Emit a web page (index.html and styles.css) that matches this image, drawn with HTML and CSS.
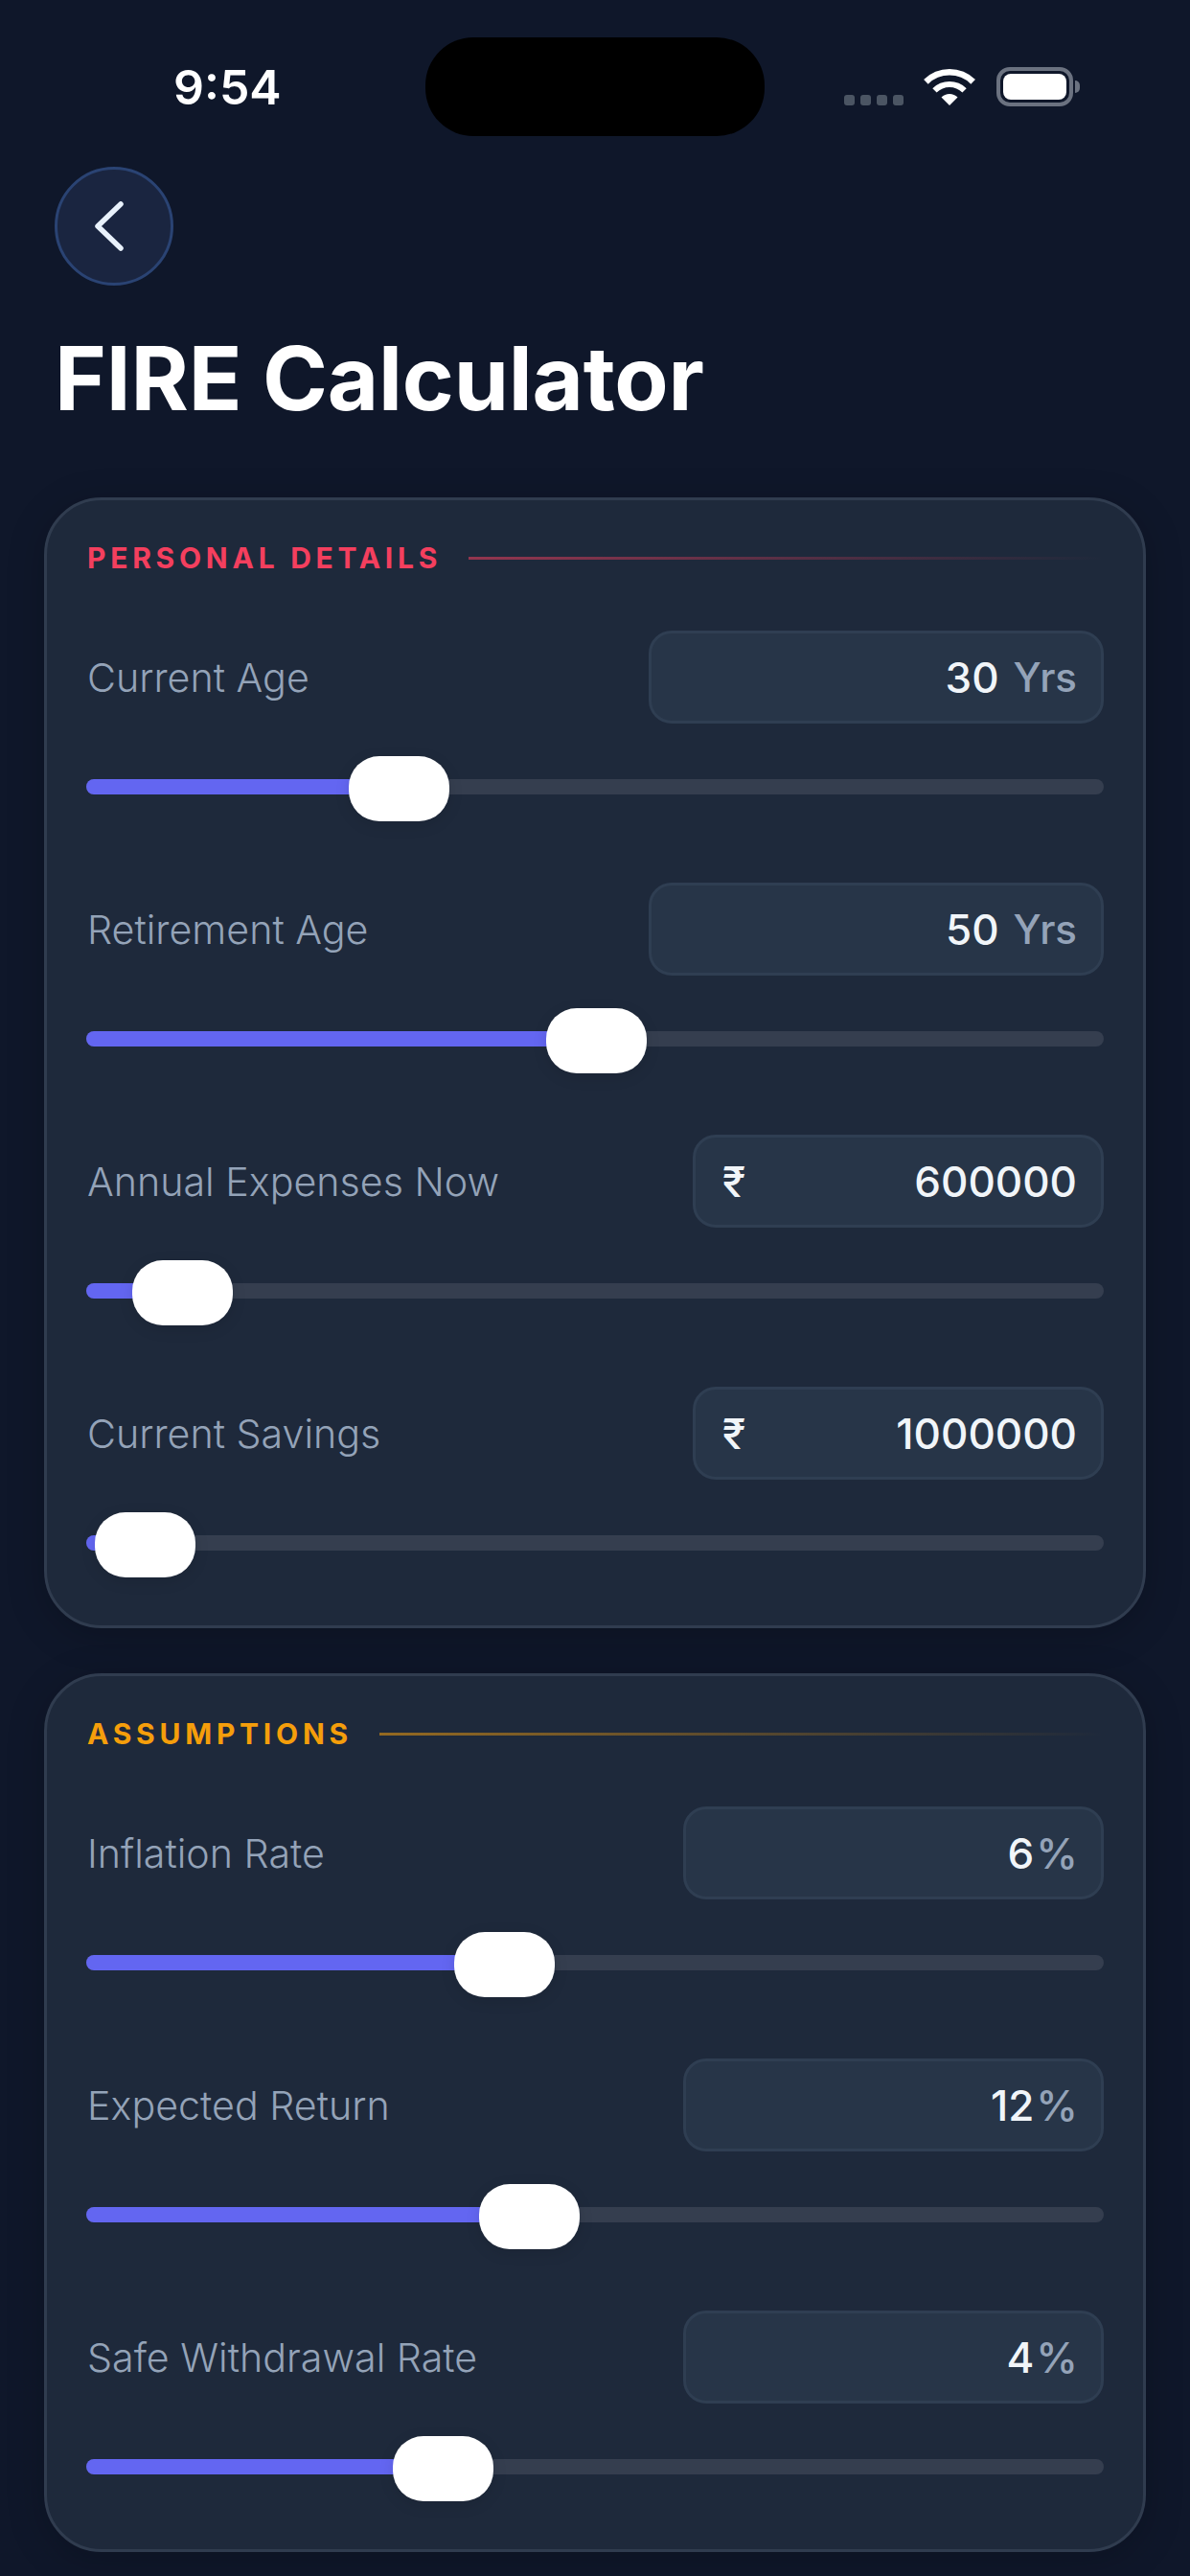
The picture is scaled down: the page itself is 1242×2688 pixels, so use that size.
FILE: index.html
```html
<!DOCTYPE html>
<html lang="en">
<head>
<meta charset="utf-8">
<meta name="viewport" content="width=device-width, initial-scale=1.0">
<title>FIRE Calculator</title>
<link rel="stylesheet" href="styles.css">
</head>
<body>
  <!-- Status bar -->
  <div class="status-bar">
    <span class="time">9:54</span>
    <div class="island"></div>
    <div class="status-icons">
      <div class="signal"><i></i><i></i><i></i><i></i></div>
      <svg class="wifi" width="54" height="39" viewBox="0 0 54 39" fill="#fff">
        <path d="M0.1 12.1A38 38 0 0 1 53.9 12.1L49.3 16.7A31.5 31.5 0 0 0 4.7 16.7Z"/>
        <path d="M9.3 21.3A25 25 0 0 1 44.7 21.3L40.4 25.6A19 19 0 0 0 13.6 25.6Z"/>
        <path d="M18.5 30.5A12 12 0 0 1 35.5 30.5L27 39Z"/>
      </svg>
      <div class="battery"><div class="battery-level"></div></div>
      <div class="battery-nub"></div>
    </div>
  </div>

  <!-- Header -->
  <div class="header">
    <button class="back-btn" type="button">
      <svg width="30" height="52" viewBox="0 0 30 52" fill="none" stroke="#e8f1fb" stroke-width="5.5" stroke-linecap="round" stroke-linejoin="round">
        <path d="M27 3L3 26L27 49"/>
      </svg>
    </button>
    <h1>FIRE Calculator</h1>
  </div>

  <div class="content">
    <div class="card">
      <div class="section-title red"><span>PERSONAL DETAILS</span><div class="section-line"></div></div>

      <div class="row">
        <div class="row-top">
          <span class="label">Current Age</span>
          <div class="field field-yrs"><span class="value">30</span><span class="unit">Yrs</span></div>
        </div>
        <div class="slider"><div class="fill" style="width: 28%"></div><div class="thumb" style="left: 25.8%"></div></div>
      </div>

      <div class="row">
        <div class="row-top">
          <span class="label">Retirement Age</span>
          <div class="field field-yrs"><span class="value">50</span><span class="unit">Yrs</span></div>
        </div>
        <div class="slider"><div class="fill" style="width: 47%"></div><div class="thumb" style="left: 45.2%"></div></div>
      </div>

      <div class="row">
        <div class="row-top">
          <span class="label">Annual Expenses Now</span>
          <div class="field field-money"><span class="rupee">₹</span><span class="value">600000</span></div>
        </div>
        <div class="slider"><div class="fill" style="width: 6%"></div><div class="thumb" style="left: 4.5%"></div></div>
      </div>

      <div class="row">
        <div class="row-top">
          <span class="label">Current Savings</span>
          <div class="field field-money"><span class="rupee">₹</span><span class="value">1000000</span></div>
        </div>
        <div class="slider"><div class="fill" style="width: 3%"></div><div class="thumb" style="left: 0.85%"></div></div>
      </div>
    </div>

    <div class="card">
      <div class="section-title orange"><span>ASSUMPTIONS</span><div class="section-line"></div></div>

      <div class="row">
        <div class="row-top">
          <span class="label">Inflation Rate</span>
          <div class="field field-pct"><span class="value">6</span><span class="unit">%</span></div>
        </div>
        <div class="slider"><div class="fill" style="width: 38%"></div><div class="thumb" style="left: 36.2%"></div></div>
      </div>

      <div class="row">
        <div class="row-top">
          <span class="label">Expected Return</span>
          <div class="field field-pct"><span class="value">12</span><span class="unit">%</span></div>
        </div>
        <div class="slider"><div class="fill" style="width: 40%"></div><div class="thumb" style="left: 38.6%"></div></div>
      </div>

      <div class="row">
        <div class="row-top">
          <span class="label">Safe Withdrawal Rate</span>
          <div class="field field-pct"><span class="value">4</span><span class="unit">%</span></div>
        </div>
        <div class="slider"><div class="fill" style="width: 32%"></div><div class="thumb" style="left: 30.1%"></div></div>
      </div>
    </div>
  </div>
</body>
</html>
```

FILE: styles.css
```css
* {
  box-sizing: border-box;
}

body {
  margin: 0;
  min-height: 100vh;
  background-color: #0f172a;
  font-family: Inter, "Liberation Sans", sans-serif;
  color: #fff;
}

/* Status bar */
.status-bar {
  position: relative;
  display: flex;
  justify-content: space-between;
  align-items: center;
  height: 111px;
  padding: 70px 115px 0 181px;
}

.time {
  padding-top: 2px;
  font-size: 50px;
  font-weight: 600;
  line-height: 41px;
}

.island {
  position: absolute;
  left: 444px;
  top: 39px;
  width: 354px;
  height: 103px;
  border-radius: 50px;
  background-color: #000;
}

.status-icons {
  display: flex;
  align-items: flex-end;
  height: 41px;
}

.signal {
  display: flex;
  gap: 6px;
  margin-right: 21px;
  padding-bottom: 1px;
}

.signal i {
  display: block;
  width: 11px;
  height: 11px;
  border-radius: 3px;
  background-color: #4b5563;
}

.wifi {
  display: block;
  margin-right: 22px;
  margin-bottom: 1px;
}

.battery {
  width: 80px;
  height: 41px;
  padding: 3px;
  border: 4px solid #6b7280;
  border-radius: 14px;
}

.battery-level {
  height: 100%;
  border-radius: 8px;
  background-color: #fff;
}

.battery-nub {
  align-self: center;
  width: 5px;
  height: 13px;
  margin-left: 2px;
  border-radius: 0 5px 5px 0;
  background-color: #6b7280;
}

/* Header */
.header {
  padding: 63px 57px 0;
}

.back-btn {
  display: flex;
  align-items: center;
  justify-content: center;
  width: 124px;
  height: 124px;
  padding: 0 10px 0 0;
  border: 3px solid #2a4373;
  border-radius: 50%;
  background-color: #1a2540;
}

h1 {
  margin: 47px 0 0;
  font-size: 92px;
  font-weight: 700;
  line-height: 100px;
  letter-spacing: -0.2px;
}

/* Cards */
.content {
  display: flex;
  flex-direction: column;
  gap: 47px;
  margin-top: 74px;
  padding: 0 46px;
}

.card {
  display: flex;
  flex-direction: column;
  gap: 64px;
  padding: 42px 41px 50px;
  border: 3px solid #303c4f;
  border-radius: 60px;
  background-color: #1e293b;
  box-shadow: 0 8px 40px rgba(0, 0, 0, 0.2);
}

.section-title {
  display: flex;
  align-items: center;
  gap: 28px;
  height: 36px;
  margin-bottom: -6px;
  padding-left: 1px;
  font-size: 30px;
  font-weight: 700;
  letter-spacing: 4.75px;
}

.section-line {
  flex: 1;
  height: 3px;
}

.red {
  color: #f43f5e;
}

.red .section-line {
  background: linear-gradient(to right, rgba(244, 63, 94, 0.55), rgba(244, 63, 94, 0));
}

.orange {
  color: #f59e0b;
}

.orange .section-line {
  background: linear-gradient(to right, rgba(245, 158, 11, 0.55), rgba(245, 158, 11, 0));
}

.row {
  display: flex;
  flex-direction: column;
  gap: 34px;
}

.row-top {
  display: flex;
  justify-content: space-between;
  align-items: center;
}

.label {
  padding-left: 1px;
  font-size: 41.2px;
  font-weight: 350;
  color: #94a3b8;
}

.field {
  display: flex;
  align-items: center;
  justify-content: flex-end;
  height: 97px;
  padding: 0 25px 0 28px;
  border: 3px solid #2f3e52;
  border-radius: 24px;
  background-color: #273548;
  font-size: 44px;
  font-weight: 500;
}

.field-yrs {
  width: 475px;
  gap: 15px;
}

.field-yrs .unit {
  font-size: 42px;
}

.field-money {
  width: 429px;
  justify-content: space-between;
}

.field-pct {
  width: 439px;
  gap: 2px;
  padding-right: 24px;
}

.value {
  color: #f1f5f9;
}

.unit {
  color: #94a3b8;
}

.rupee {
  color: #f1f5f9;
}

/* Sliders */
.slider {
  position: relative;
  height: 68px;
  display: flex;
  align-items: center;
}

.slider::before {
  content: "";
  width: 100%;
  height: 16px;
  margin-top: -4px;
  border-radius: 8px;
  background-color: #353e4f;
}

.fill {
  position: absolute;
  left: 0;
  top: 24px;
  height: 16px;
  border-radius: 8px;
  background-color: #6366f1;
}

.thumb {
  position: absolute;
  top: 0;
  width: 105px;
  height: 68px;
  border-radius: 32px;
  background-color: #fff;
  box-shadow: 0 4px 16px rgba(0, 0, 0, 0.1);
}
```
